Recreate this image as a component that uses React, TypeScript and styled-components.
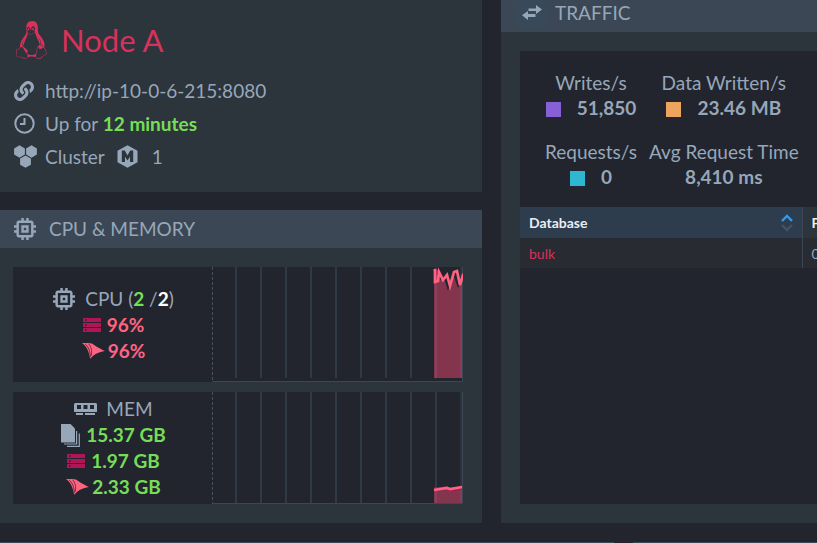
import React from "react";
import styled, { createGlobalStyle } from "styled-components";
import { FaLinux, FaLink } from "react-icons/fa";

const color = {
  page: "#22252d",
  panel: "#2c343c",
  header: "#3b4754",
  line: "#36424f",
  text: "#97a7b9",
  red: "#d8315b",
  pink: "#ff6382",
  magenta: "#b01657",
  green: "#77dd58",
};

const GlobalStyle = createGlobalStyle`
  *, *::before, *::after { box-sizing: border-box; }
  body {
    margin: 0;
    background: ${color.page};
    color: ${color.text};
    font: 19px/26px Lato, "Liberation Sans", sans-serif;
    overflow: hidden;
  }
  h1, h2, p, dl, dt, dd { margin: 0; font-weight: 400; }
`;

const Page = styled.div`
  display: flex;
  flex-direction: column;
  min-height: 100vh;
`;

const Columns = styled.main`
  flex: 1;
  display: grid;
  grid-template-columns: minmax(0, 482fr) minmax(0, 316fr);
  gap: 19px;
  padding-bottom: 19px;
`;

const Footer = styled.footer`
  display: grid;
  grid-template-columns: 614fr 19px 184fr;
`;

const FooterEdge = styled.div<{ $dark?: boolean }>`
  height: 1px;
  background: ${(p) => (p.$dark ? "#2a1f2c" : color.header)};
`;

const Stack = styled.div`
  display: flex;
  flex-direction: column;
  gap: 18px;
`;

const Panel = styled.section`
  display: flex;
  flex-direction: column;
  background: ${color.panel};
`;

const NodePanel = styled(Panel)`
  padding: 17px 14px 19px;
`;

const NodeTitle = styled.h1`
  display: flex;
  align-items: center;
  gap: 12px;
  height: 46px;
  margin-bottom: 11px;
  color: ${color.red};
  font-size: 31px;
  line-height: 46px;
`;

const NodeRow = styled.p`
  display: flex;
  align-items: center;
  height: 33px;
  line-height: 33px;
  white-space: pre;
`;

const IconSlot = styled.span<{ $width: number }>`
  display: flex;
  flex: none;
  width: ${(p) => p.$width}px;
`;

const NodeLink = styled.a`
  color: inherit;
  text-decoration: none;
`;

const MemberIcon = styled.span`
  display: flex;
  margin: 0 14px 0 12px;
`;

const Strong = styled.strong<{ $color?: string }>`
  font-weight: 700;
  color: ${(p) => p.$color ?? "inherit"};
`;

const PanelHeader = styled.h2<{ $cut?: boolean }>`
  display: flex;
  align-items: center;
  height: ${(p) => (p.$cut ? 32 : 38)}px;
  padding: 0 14px ${(p) => (p.$cut ? 7 : 0)}px;
  background: ${color.header};
  font-size: 19px;
  line-height: 26px;
  overflow: hidden;
`;

const Round = styled.span`
  display: flex;
  flex: none;
  align-items: center;
  justify-content: center;
  width: 34px;
  height: 34px;
  margin-right: 6px;
  border-radius: 50%;
  background: #384959;
`;

const Gauges = styled.div`
  display: flex;
  flex-direction: column;
  gap: 10px;
  padding: 19px 19px 19px 13px;
`;

const Gauge = styled.div<{ $height: number }>`
  display: flex;
  height: ${(p) => p.$height}px;
  background: ${color.page};
`;

const Readings = styled.div`
  flex: none;
  display: flex;
  flex-direction: column;
  align-items: center;
  justify-content: center;
  width: 199px;
  padding-left: 2px;
`;

const Reading = styled.p<{ $gap: number }>`
  display: flex;
  align-items: center;
  gap: ${(p) => p.$gap}px;
  height: 26px;
  white-space: pre;
`;

const ChartArea = styled.div`
  flex: 1;
  min-width: 0;
  svg { display: block; width: 100%; height: 100%; }
`;

const TrafficBody = styled.div`
  flex: 1;
  display: flex;
  padding: 19px 0 19px 19px;
`;

const TrafficBox = styled.div`
  flex: 1;
  min-width: 0;
  background: ${color.page};
  overflow: hidden;
`;

const Stats = styled.dl`
  display: grid;
  grid-template-columns: max-content max-content;
  gap: 19px 12px;
  padding: 19px 0 18px 25px;
  line-height: 25px;
  text-align: center;
`;

const StatValue = styled.dd`
  display: flex;
  align-items: center;
  justify-content: center;
  gap: 16px;
  font-weight: 700;
`;

const Swatch = styled.span<{ $color: string }>`
  width: 15px;
  height: 15px;
  margin-top: 4px;
  background: ${(p) => p.$color};
`;

const Table = styled.table`
  width: 480px;
  table-layout: fixed;
  border-collapse: collapse;
  font-size: 14px;
  line-height: 18px;
  text-align: left;
`;

const Th = styled.th<{ $sorted?: boolean }>`
  width: ${(p) => (p.$sorted ? "282px" : "auto")};
  height: 31px;
  padding: 0 9px;
  border-right: 1px solid ${color.header};
  background: ${(p) => (p.$sorted ? "#2d3d4d" : color.panel)};
  color: #e8eef4;
  font-weight: 700;
`;

const SortButton = styled.button`
  display: flex;
  align-items: center;
  justify-content: space-between;
  width: 100%;
  padding: 0;
  border: 0;
  background: none;
  color: inherit;
  font: inherit;
`;

const Td = styled.td`
  height: 30px;
  padding: 1px 9px 0;
  border-right: 1px solid ${color.header};
  background: #282b32;
`;

const DbLink = styled.a`
  color: ${color.red};
  text-decoration: none;
`;

const ChipIcon = () => (
  <svg width="22" height="22" viewBox="3 3 18 18" fill="currentColor">
    <path d="M15 9H9v6h6V9zm-2 4h-2v-2h2v2zm8-2V9h-2V7c0-1.100-.9-2-2-2h-2V3h-2v2h-2V3H9v2H7c-1.100 0-2 .9-2 2v2H3v2h2v2H3v2h2v2c0 1.100.9 2 2 2h2v2h2v-2h2v2h2v-2h2c1.100 0 2-.9 2-2v-2h2v-2h-2v-2h2zm-4 6H7V7h10v10z" />
  </svg>
);

const ClockIcon = () => (
  <svg width="21" height="21" viewBox="0 0 21 21" fill="none" stroke="currentColor" strokeWidth="2">
    <circle cx="10.500" cy="10.500" r="9.200" />
    <path d="M10.500 5v6H6" />
  </svg>
);

const ClusterIcon = () => (
  <svg width="23" height="23" viewBox="0 0 23 23" fill="currentColor">
    <path d="M5.500 .3l5.400 3.100v6.200l-5.400 3.100-5.400-3.100v-6.200zM17.500 .3l5.400 3.100v6.200l-5.400 3.100-5.400-3.100v-6.200zM11.500 10.400l5.400 3.100v6.200l-5.400 3.100-5.400-3.100v-6.200z" />
  </svg>
);

const MemberHexIcon = () => (
  <svg width="21" height="23" viewBox="0 0 21 23">
    <path d="M10.500 .3L20.500 5.800V17.200L10.500 22.700L.5 17.200V5.800z" fill="currentColor" />
    <path d="M4.800 17V5.500h3l2.700 5 2.700-5h3V17h-3.200v-5.200l-2.500 3.700L8 11.800V17z" fill={color.panel} />
  </svg>
);

const ArrowsIcon = () => (
  <svg width="20" height="15" viewBox="0 0 20 15" fill="currentColor">
    <path d="M6.500 3.500H14V0l6 4.500L14 9V6H6.500zM13.500 9v3H6v3L0 10.300 6 6v3z" />
  </svg>
);

const ServerIcon = () => (
  <svg width="18" height="14" viewBox="0 0 18 14">
    <path d="M0 0h18v4H0zM0 5h18v4H0zM0 10h18v4H0z" fill={color.magenta} />
    <path d="M2 1.300h1.500v1.400H2zM2 6.300h1.500v1.400H2zM2 11.300h1.500v1.400H2z" fill={color.page} />
  </svg>
);

const BirdIcon = () => (
  <svg width="23" height="16" viewBox="0 0 23 16">
    <path d="M0 .3C5-.3 8 0 10.500 .8c2 1.700 5 3.700 12.300 7.200-6 1-10.800 3-14.600 7.800C7 10 5.500 3.500 0 .3z" fill={color.pink} />
    <path d="M3 .8c4 3 4.800 8 5.500 13M6.500 .8c3 3 3.500 7 2.800 12" fill="none" stroke={color.page} strokeWidth=".7" />
  </svg>
);

const RamIcon = () => (
  <svg width="23" height="12" viewBox="0 0 23 12" fill="currentColor">
    <path fillRule="evenodd" d="M1 0h21l1 1v8H0V1zM3 2v4h4V2zM9.500 2v4h4V2zM16 2v4h4V2zM2 10h7v2H2zM11 10h10v2H11z" />
  </svg>
);

const PagesIcon = () => (
  <svg width="19" height="23" viewBox="0 0 19 23" fill="none" stroke="currentColor" strokeWidth="1.200">
    <path d="M0 0h9.500l4.500 4.500v14H0z" fill="currentColor" stroke="none" />
    <path d="M3 20h12.600V7M6 22.300h12.300V9.500" />
  </svg>
);

const SortIcon = () => (
  <svg width="12" height="18" viewBox="0 0 12 18" fill="none" strokeWidth="2.400">
    <path d="M1 7l5-5 5 5" stroke="#2f9bf3" />
    <path d="M1 11l5 5 5-5" stroke="#435366" />
  </svg>
);

const gridLines = [24, 49, 74, 99, 124, 149, 174, 199, 224, 249];

type ChartProps = { label: string; height: number; floor: number; area: string; under: string; line: string };

const Chart = ({ label, height, floor, area, under, line }: ChartProps) => (
  <ChartArea>
    <svg viewBox={`0 0 251 ${height}`} preserveAspectRatio="none" role="img" aria-label={label}>
      {gridLines.map((x) => (
        <path key={x} d={`M${x} 0V${floor}`} stroke={color.line} strokeWidth={x === 249 ? 1 : 1.500} />
      ))}
      <path d={`M.5 0V${height}`} stroke="#47505b" strokeDasharray="3 2" />
      <path d={`M0 ${height - 0.5}H250.500V0`} stroke={color.header} fill="none" />
      <path d={area} fill="#f04872" fillOpacity=".48" />
      <path d={under} stroke={color.magenta} strokeWidth="3" fill="none" />
      <path d={line} stroke={color.pink} strokeWidth="2.700" fill="none" />
    </svg>
  </ChartArea>
);

export default function App() {
  return (
    <Page>
      <GlobalStyle />
      <Columns>
        <Stack>
          <NodePanel>
            <NodeTitle>
              <IconSlot $width={35}><FaLinux size={38} /></IconSlot>
              Node A
            </NodeTitle>
            <NodeRow>
              <IconSlot $width={31}><FaLink size={20} /></IconSlot>
              <NodeLink href="http://ip-10-0-6-215:8080">http://ip-10-0-6-215:8080</NodeLink>
            </NodeRow>
            <NodeRow>
              <IconSlot $width={31}><ClockIcon /></IconSlot>
              Up for <Strong $color={color.green}>12 minutes</Strong>
            </NodeRow>
            <NodeRow>
              <IconSlot $width={31}><ClusterIcon /></IconSlot>
              Cluster
              <MemberIcon><MemberHexIcon /></MemberIcon>
              1
            </NodeRow>
          </NodePanel>
          <Panel>
            <PanelHeader>
              <IconSlot $width={35}><ChipIcon /></IconSlot>
              CPU &amp; MEMORY
            </PanelHeader>
            <Gauges>
              <Gauge $height={115}>
                <Readings>
                  <Reading $gap={10}>
                    <ChipIcon />
                    <span>
                      CPU (<Strong $color={color.green}>2</Strong> /<Strong $color="#fff">2</Strong>)
                    </span>
                  </Reading>
                  <Reading $gap={6}><ServerIcon /><Strong $color={color.pink}>96%</Strong></Reading>
                  <Reading $gap={3}><BirdIcon /><Strong $color={color.pink}>96%</Strong></Reading>
                </Readings>
                <Chart
                  label="CPU usage"
                  height={115}
                  floor={111}
                  area="M222 111V14l2-8 4 7 4-2 4 13 5-17 5 14 4-9V111z"
                  under="M222 2l2 3 3-1"
                  line="M223 2v13l3-1 1-9 4 8 4-5 3 11 4-14 3-1 3 14 3-10 4-4"
                />
              </Gauge>
              <Gauge $height={112}>
                <Readings>
                  <Reading $gap={9}><RamIcon />MEM</Reading>
                  <Reading $gap={6}><PagesIcon /><Strong $color={color.green}>15.37 GB</Strong></Reading>
                  <Reading $gap={6}><ServerIcon /><Strong $color={color.green}>1.97 GB</Strong></Reading>
                  <Reading $gap={3}><BirdIcon /><Strong $color={color.green}>2.33 GB</Strong></Reading>
                </Readings>
                <Chart
                  label="Memory usage"
                  height={112}
                  floor={111}
                  area="M222 111V98l28-3V111z"
                  under="M222 97l13-1 3 2 12-2"
                  line="M222 98l13-2 3 1 12-2"
                />
              </Gauge>
            </Gauges>
          </Panel>
        </Stack>
        <Panel>
          <PanelHeader $cut>
            <Round><ArrowsIcon /></Round>
            TRAFFIC
          </PanelHeader>
          <TrafficBody>
            <TrafficBox>
              <Stats>
                <div>
                  <dt>Writes/s</dt>
                  <StatValue><Swatch $color="#8561d5" />51,850</StatValue>
                </div>
                <div>
                  <dt>Data Written/s</dt>
                  <StatValue><Swatch $color="#eda45f" />23.46 MB</StatValue>
                </div>
                <div>
                  <dt>Requests/s</dt>
                  <StatValue><Swatch $color="#2fb6d1" />0</StatValue>
                </div>
                <div>
                  <dt>Avg Request Time</dt>
                  <StatValue>8,410 ms</StatValue>
                </div>
              </Stats>
              <Table>
                <thead>
                  <tr>
                    <Th $sorted aria-sort="ascending"><SortButton type="button">Database<SortIcon /></SortButton></Th>
                    <Th>Path</Th>
                  </tr>
                </thead>
                <tbody>
                  <tr>
                    <Td><DbLink href="#bulk">bulk</DbLink></Td>
                    <Td>0</Td>
                  </tr>
                </tbody>
              </Table>
            </TrafficBox>
          </TrafficBody>
        </Panel>
      </Columns>
      <Footer>
        <FooterEdge />
        <FooterEdge $dark />
        <FooterEdge />
      </Footer>
    </Page>
  );
}
